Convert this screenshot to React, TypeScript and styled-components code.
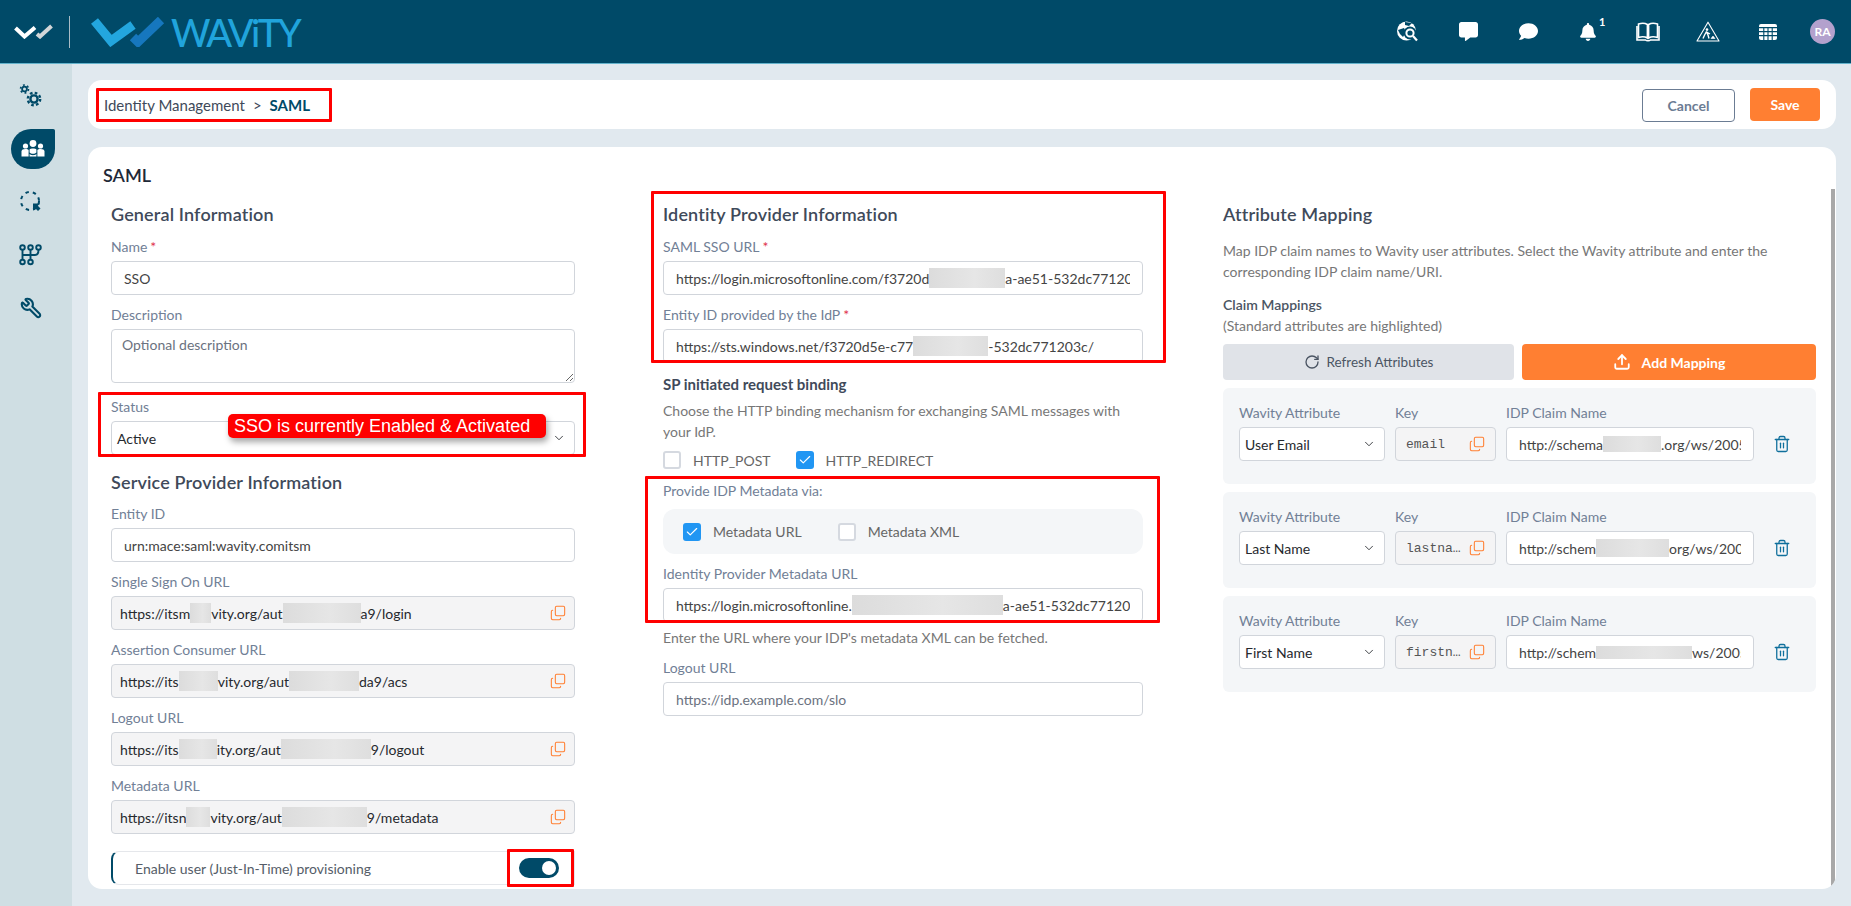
import React from 'react';
import styled, { createGlobalStyle } from 'styled-components';
import { Check, ChevronDown, Copy, RotateCw, Trash2, Upload, Wrench } from 'lucide-react';
import { FaBell, FaComment, FaCommentAlt } from 'react-icons/fa';

const dark = '#004a68';
const orange = '#ff7f32';

const GlobalStyle = createGlobalStyle`
    html, body {
        margin: 0;
        height: 100%;
        overflow: hidden;
        background: #e1e9ef;
        font-family: Lato, 'Noto Sans', sans-serif;
    }
    * { box-sizing: border-box; }
`;

const Header = styled.header`
    height: 64px;
    background: ${dark};
    border-bottom: 1px solid #63b3cc;
    display: flex;
    align-items: center;
    padding: 0 16px 0 14px;
`;

const Divider = styled.div`
    width: 1px;
    height: 32px;
    background: #a9bcc6;
    margin: 0 21px 0 16px;
`;

const BrandText = styled.span`
    color: #20a4dc;
    font-size: 38px;
    font-weight: 500;
    line-height: 1;
    letter-spacing: -2.5px;
    margin-left: 6px;
`;

const HeaderIcons = styled.div`
    margin-left: auto;
    display: flex;
    align-items: center;
`;

const HeaderIcon = styled.div`
    width: 60px;
    height: 40px;
    display: flex;
    align-items: center;
    justify-content: center;
    color: #fff;
    position: relative;
`;

const BellCount = styled.span`
    position: absolute;
    top: 3px;
    left: 41px;
    font-size: 11px;
    font-weight: 700;
    color: #fff;
`;

const Avatar = styled.div`
    width: 25px;
    height: 25px;
    border-radius: 50%;
    background: #b3a1cd;
    color: #fff;
    font-size: 12px;
    font-weight: 700;
    display: flex;
    align-items: center;
    justify-content: center;
    margin-left: 12px;
`;

const Body = styled.div`
    display: flex;
    height: 842px;
`;

const Sidebar = styled.nav`
    width: 72px;
    flex-shrink: 0;
    background: #cfdee3;
    display: flex;
    flex-direction: column;
    align-items: flex-start;
    gap: 13px;
    padding: 12px 0 0 11px;
`;

const NavItem = styled.div<{ $active?: boolean }>`
    width: ${p => (p.$active ? 44 : 40)}px;
    height: 40px;
    display: flex;
    align-items: center;
    justify-content: center;
    color: ${p => (p.$active ? '#fff' : dark)};
    background: ${p => (p.$active ? dark : 'transparent')};
    border-radius: ${p => (p.$active ? '22px 2px 22px 22px' : '0')};
`;

const FlippedWrench = styled(Wrench)`
    transform: scaleX(-1);
`;

const Main = styled.main`
    flex: 1;
    padding: 16px 15px 17px 16px;
    display: flex;
    flex-direction: column;
    gap: 18px;
`;

const CrumbBar = styled.div`
    height: 49px;
    flex-shrink: 0;
    background: #fff;
    border-radius: 14px;
    display: flex;
    align-items: center;
    padding: 0 16px 0 8px;
`;

const CrumbMark = styled.div`
    width: 236px;
    height: 34px;
    border: 3px solid #f00;
    border-radius: 1px;
    display: flex;
    align-items: center;
    padding-left: 5px;
    font-size: 15px;
    color: #3f4a5a;
`;

const CrumbSep = styled.span`
    margin: 0 8px;
`;

const CrumbCurrent = styled.b`
    color: ${dark};
    font-weight: 700;
`;

const Actions = styled.div`
    margin-left: auto;
    display: flex;
    align-items: center;
    gap: 15px;
`;

const CancelButton = styled.button`
    width: 93px;
    height: 33px;
    margin-top: 2px;
    background: #fff;
    border: 1px solid #6b7c93;
    border-radius: 4px;
    color: #6b7c93;
    font: 700 14px Lato, sans-serif;
`;

const SaveButton = styled.button`
    width: 70px;
    height: 33px;
    background: ${orange};
    border: 0;
    border-radius: 4px;
    color: #fff;
    font: 700 14px Lato, sans-serif;
`;

const Card = styled.section`
    flex: 1;
    min-height: 0;
    background: #fff;
    border-radius: 14px;
    padding: 16px 0 0 15px;
    position: relative;
    overflow: hidden;
`;

const ScrollThumb = styled.div`
    position: absolute;
    top: 42px;
    bottom: 0;
    right: 1px;
    width: 4px;
    background: #a8a8a8;
`;

const CardTitle = styled.h1`
    margin: 0 0 15px;
    font-size: 18px;
    line-height: 24px;
    font-weight: 600;
    color: #1f2937;
`;

const Columns = styled.div`
    display: grid;
    grid-template-columns: 552px 560px 593px;
    padding-left: 8px;
`;

const Column = styled.div<{ $gap?: number }>`
    padding-right: ${p => p.$gap || 0}px;
`;

const Heading = styled.h2<{ $top?: number; $bottom?: number }>`
    margin: ${p => p.$top || 0}px 0 ${p => p.$bottom ?? 11}px;
    font-size: 18px;
    line-height: 24px;
    font-weight: 600;
    letter-spacing: 0.15px;
    color: #3f4a5a;
`;

const Field = styled.div<{ $tight?: boolean }>`
    margin-bottom: ${p => (p.$tight ? 0 : 10)}px;
`;

const Label = styled.label`
    display: block;
    height: 20px;
    margin-bottom: 4px;
    font-size: 14px;
    line-height: 20px;
    color: #718096;
`;

const Required = styled.span`
    color: #e0324b;
    margin-left: 3px;
`;

const TextInput = styled.input`
    display: block;
    width: 100%;
    height: 34px;
    padding: 0 12px;
    border: 1px solid #d1d5db;
    border-radius: 4px;
    background: #fff;
    color: #444;
    font: 400 14px Lato, sans-serif;
    outline: none;
    &::placeholder { color: #6b7280; opacity: 1; }
`;

const TextArea = styled.textarea`
    display: block;
    width: 100%;
    height: 54px;
    padding: 6px 10px;
    border: 1px solid #d1d5db;
    border-radius: 4px;
    font: 400 14px Lato, sans-serif;
    outline: none;
    &::placeholder { color: #6b7280; opacity: 1; }
`;

const ValueBox = styled.div<{ $readOnly?: boolean; $pad?: number }>`
    height: 34px;
    display: flex;
    align-items: center;
    gap: 6px;
    padding: 0 ${p => p.$pad ?? 12}px;
    border: 1px solid #d1d5db;
    border-radius: 4px;
    background: ${p => (p.$readOnly ? '#f4f4f5' : '#fff')};
    color: ${p => (p.$readOnly ? '#26292e' : '#444')};
    font-size: 14px;
`;

const ValueText = styled.span`
    flex: 1;
    min-width: 0;
    display: flex;
    align-items: center;
    overflow: hidden;
    white-space: nowrap;
`;

const Blur = styled.span<{ $w: number; $h?: number }>`
    flex: none;
    width: ${p => p.$w}px;
    height: ${p => p.$h || 20}px;
    background: linear-gradient(90deg, #dcdcdc, #e6e6e6 60%, #dedede);
`;

const KeyText = styled.span`
    flex: 1;
    min-width: 0;
    overflow: hidden;
    white-space: nowrap;
    text-overflow: ellipsis;
    color: #555;
    font: 400 13px 'Liberation Mono', monospace;
`;

const CopyIcon = styled(Copy)`
    flex: none;
    color: ${orange};
    transform: scaleY(-1);
`;

const SelectBox = styled.div`
    height: 34px;
    width: 100%;
    display: flex;
    align-items: center;
    justify-content: space-between;
    padding: 0 8px 0 5px;
    border: 1px solid #d1d5db;
    border-radius: 4px;
    background: #fff;
    color: #26292e;
    font-size: 14px;
    position: relative;
`;

const Balloon = styled.div`
    position: absolute;
    left: 116px;
    top: -8px;
    width: 318px;
    height: 24px;
    padding-left: 6px;
    border-radius: 5px;
    background: #f00;
    color: #fff;
    font: 400 18px/24px 'Liberation Sans', Arial, sans-serif;
    white-space: nowrap;
    box-shadow: 2px 4px 6px rgba(0, 0, 0, 0.35);
`;

const Marked = styled.div<{ $t: number; $r: number; $b: number; $l: number; $mt?: number }>`
    position: relative;
    margin-top: ${p => p.$mt || 0}px;
    &::after {
        content: '';
        position: absolute;
        top: ${p => p.$t}px;
        right: ${p => p.$r}px;
        bottom: ${p => p.$b}px;
        left: ${p => p.$l}px;
        border: 3px solid #f00;
        border-radius: 1px;
        pointer-events: none;
    }
`;

const ToggleRow = styled.div`
    height: 34px;
    display: flex;
    align-items: center;
    justify-content: space-between;
    padding: 0 15px 0 22px;
    border: 1px solid #e5e7eb;
    border-left: 2px solid ${dark};
    border-radius: 8px 0 0 8px;
    font-size: 14px;
    color: #555d68;
`;

const Toggle = styled.div`
    width: 40px;
    height: 20px;
    border-radius: 10px;
    background: ${dark};
    display: flex;
    align-items: center;
    justify-content: flex-end;
    padding-right: 3px;
    &::after {
        content: '';
        width: 14px;
        height: 14px;
        border-radius: 50%;
        background: #fff;
    }
`;

const SubHeading = styled.h3`
    margin: 11px 0 6px;
    font-size: 15px;
    line-height: 20px;
    font-weight: 700;
    color: #3f4a5a;
`;

const HelpText = styled.p<{ $top?: number; $bottom?: number }>`
    margin: ${p => p.$top || 0}px 0 ${p => p.$bottom ?? 9}px;
    font-size: 14px;
    line-height: 21px;
    color: #777;
`;

const CheckRow = styled.div`
    display: flex;
    align-items: center;
    gap: 25px;
    height: 18px;
    margin: 9px 0 12px;
`;

const MetaPill = styled.div`
    height: 45px;
    margin: 8px 0 10px;
    padding-left: 20px;
    display: flex;
    align-items: center;
    gap: 36px;
    border-radius: 12px;
    background: #f4f6f8;
`;

const CheckItem = styled.div`
    display: flex;
    align-items: center;
    gap: 12px;
    font-size: 14px;
    color: #666;
`;

const Tick = styled.span<{ $on?: boolean }>`
    width: 18px;
    height: 18px;
    border-radius: 3px;
    border: ${p => (p.$on ? '0' : '2px solid #d5d9e0')};
    background: ${p => (p.$on ? '#2196f3' : '#fff')};
    color: #fff;
    display: flex;
    align-items: center;
    justify-content: center;
`;

const ClaimTitle = styled.div`
    font-size: 14px;
    line-height: 21px;
    font-weight: 600;
    color: #4b5563;
`;

const ClaimNote = styled.div`
    font-size: 14px;
    line-height: 21px;
    color: #777;
`;

const ButtonRow = styled.div`
    display: grid;
    grid-template-columns: 291px 294px;
    gap: 8px;
    margin: 8px 0;
`;

const ActionButton = styled.button<{ $primary?: boolean }>`
    height: 36px;
    display: flex;
    align-items: center;
    justify-content: center;
    gap: ${p => (p.$primary ? 11 : 7)}px;
    border: 0;
    border-radius: 4px;
    background: ${p => (p.$primary ? orange : '#e0e3e8')};
    color: ${p => (p.$primary ? '#fff' : '#4b5563')};
    font: ${p => (p.$primary ? '700 14px' : '400 13.5px')} Lato, sans-serif;
`;

const MapRow = styled.div`
    height: 96px;
    margin-bottom: 8px;
    padding: 15px 16px 0;
    border-radius: 6px;
    background: #f4f6f8;
`;

const MapGrid = styled.div`
    display: grid;
    grid-template-columns: 146px 101px 248px 30px;
    column-gap: 10px;
    align-items: center;
`;

const TrashButton = styled.div`
    color: #0f6f9c;
    display: flex;
    justify-content: center;
    padding-left: 6px;
`;

const SmallLogo = () => (
    <svg width="39" height="15" viewBox="0 0 39 15">
        <polyline points="1.5,4 10.5,12.5 21,3.5" fill="none" stroke="#fff" strokeWidth="4" />
        <polyline points="23,10 26,12.5 37.5,2" fill="none" stroke="#d2d6d8" strokeWidth="4" />
    </svg>
);

const BigLogo = () => (
    <svg width="74" height="30" viewBox="0 0 74 30">
        <polyline points="3.5,4 20,24 42,8" fill="none" stroke="#23a6de" strokeWidth="9" />
        <polyline points="42,20 47,25 70,3" fill="none" stroke="#1677be" strokeWidth="9" />
    </svg>
);

const GlobeSearch = () => (
    <svg width="24" height="24" viewBox="0 0 24 24">
        <circle cx="10.5" cy="11" r="9.5" fill="#fff" />
        <path d="M2 10 L8 8 L10 12 L7 17 L4 14 Z" fill={dark} />
        <path d="M9 2 L16 3 L13 6 L9 5 Z" fill={dark} />
        <circle cx="14" cy="13" r="6.5" fill={dark} />
        <circle cx="14" cy="13" r="3.6" fill="none" stroke="#fff" strokeWidth="2" />
        <line x1="17" y1="16" x2="21" y2="20.5" stroke="#fff" strokeWidth="2.2" />
    </svg>
);

const BookIcon = () => (
    <svg width="24" height="20" viewBox="0 0 24 20" fill="none" stroke="#fff" strokeWidth="1.6">
        <path d="M2.5 2 C6 0.8 9 1 11.4 2.5 V16 C9 14.6 6 14.4 2.5 15.5 Z" />
        <path d="M21.5 2 C18 0.8 15 1 12.6 2.5 V16 C15 14.6 18 14.4 21.5 15.5 Z" />
        <path d="M1 4 V18 H9.5 C10.5 19 13.5 19 14.5 18 H23 V4" />
    </svg>
);

const RoadworkIcon = () => (
    <svg width="24" height="21" viewBox="0 0 24 21" fill="none" stroke="#fff">
        <path d="M12 1.2 L23 20 H1 Z" strokeWidth="1.1" strokeLinejoin="round" />
        <circle cx="11" cy="8.6" r="1.3" fill="#fff" stroke="none" />
        <path d="M10.5 10.5 L8.6 14 L7 17.5 M10.5 10.5 L12 14 L13 17.5 M10.5 11 L14 13" strokeWidth="1.4" />
        <path d="M15 17.5 L17 15 L19 17.5 Z" fill="#fff" strokeWidth="0.6" />
    </svg>
);

const GridIcon = () => (
    <svg width="18" height="16" viewBox="0 0 18 16">
        <rect width="18" height="16" rx="2" fill="#fff" />
        <path d="M0 3.6 H18 M0 7.6 H18 M0 11.6 H18 M4.8 3 V16 M9 3 V16 M13.2 3 V16" stroke={dark} strokeWidth="1.1" />
    </svg>
);

const GearsIcon = () => (
    <svg width="24" height="24" viewBox="0 0 24 24" fill="none" stroke={dark}>
        <circle cx="5.5" cy="5" r="2.4" strokeWidth="1.8" />
        <circle cx="5.5" cy="5" r="4" strokeWidth="1.6" strokeDasharray="1.9 2.3" />
        <circle cx="15" cy="15" r="3.6" strokeWidth="2.4" />
        <circle cx="15" cy="15" r="6.2" strokeWidth="2.4" strokeDasharray="2.6 2.27" />
    </svg>
);

const TeamIcon = () => (
    <svg width="24" height="20" viewBox="0 0 24 20" fill="#fff">
        <circle cx="12" cy="4.5" r="3.4" />
        <circle cx="4.5" cy="7" r="2.6" />
        <circle cx="19.5" cy="7" r="2.6" />
        <path d="M0.5 17.5 V12.5 C0.5 10.8 2 10 4.5 10 C6 10 7 10.3 7.6 11 L7.6 17.5 Z" />
        <path d="M23.5 17.5 V12.5 C23.5 10.8 22 10 19.5 10 C18 10 17 10.3 16.4 11 L16.4 17.5 Z" />
        <path d="M8.6 10.5 C9.6 9.2 14.4 9.2 15.4 10.5 V13.5 C14 15.3 10 15.3 8.6 13.5 Z" />
        <path d="M8.6 15 C10 16.6 14 16.6 15.4 15 V17.5 H8.6 Z" />
    </svg>
);

const CycleIcon = () => (
    <svg width="24" height="24" viewBox="0 0 24 24">
        <circle cx="11" cy="11" r="9" fill="none" stroke={dark} strokeWidth="2" strokeDasharray="3.4 4.1" />
        <path d="M14 13.5 H21 L18.8 15.7 L21.5 18.5 L19 21 L16.2 18.2 L14 20.4 Z" fill={dark} />
    </svg>
);

const TreeIcon = () => (
    <svg width="24" height="22" viewBox="0 0 24 22" fill="none" stroke={dark} strokeWidth="1.9">
        <circle cx="3.5" cy="3.5" r="2.3" />
        <circle cx="11.5" cy="3.5" r="2.3" />
        <circle cx="19.5" cy="3.5" r="2.3" />
        <circle cx="3.5" cy="18" r="2.3" />
        <circle cx="11.5" cy="18" r="2.3" />
        <path d="M3.5 6 V15.5 M11.5 6 V15.5 M3.5 11 H16 C18 11 19.5 9.5 19.5 6" />
    </svg>
);

interface Segment { text?: string; blur?: number; h?: number }

const Masked: React.FC<{ parts: Segment[] }> = ({ parts }) => (
    <ValueText>
        {parts.map((part, i) => part.text
            ? <span key={i}>{part.text}</span>
            : <Blur key={i} $w={part.blur || 0} $h={part.h} />)}
    </ValueText>
);

const ReadOnlyField: React.FC<{ label: string; parts: Segment[] }> = ({ label, parts }) => (
    <Field>
        <Label>{label}</Label>
        <ValueBox $readOnly $pad={8}>
            <Masked parts={parts} />
            <CopyIcon size={16} strokeWidth={1.6} />
        </ValueBox>
    </Field>
);

const mappings = [
    {
        attribute: 'User Email',
        keyName: 'email',
        claim: [{ text: 'http://schema' }, { blur: 58, h: 16 }, { text: '.org/ws/2005/05/identity' }],
    },
    {
        attribute: 'Last Name',
        keyName: 'lastname',
        claim: [{ text: 'http://schem' }, { blur: 73, h: 18 }, { text: 'org/ws/2005/05/identity' }],
    },
    {
        attribute: 'First Name',
        keyName: 'firstname',
        claim: [{ text: 'http://schem' }, { blur: 96, h: 13 }, { text: 'ws/2005/05/identity' }],
    },
];

const App: React.FC = () => (
    <>
        <GlobalStyle />
        <Header>
            <SmallLogo />
            <Divider />
            <BigLogo />
            <BrandText>WAViTY</BrandText>
            <HeaderIcons>
                <HeaderIcon><GlobeSearch /></HeaderIcon>
                <HeaderIcon><FaCommentAlt size={19} /></HeaderIcon>
                <HeaderIcon><FaComment size={19} /></HeaderIcon>
                <HeaderIcon><FaBell size={18} /><BellCount>1</BellCount></HeaderIcon>
                <HeaderIcon><BookIcon /></HeaderIcon>
                <HeaderIcon><RoadworkIcon /></HeaderIcon>
                <HeaderIcon><GridIcon /></HeaderIcon>
                <Avatar>RA</Avatar>
            </HeaderIcons>
        </Header>
        <Body>
            <Sidebar>
                <NavItem><GearsIcon /></NavItem>
                <NavItem $active><TeamIcon /></NavItem>
                <NavItem><CycleIcon /></NavItem>
                <NavItem><TreeIcon /></NavItem>
                <NavItem><FlippedWrench size={22} strokeWidth={2.3} /></NavItem>
            </Sidebar>
            <Main>
                <CrumbBar>
                    <CrumbMark>
                        Identity Management<CrumbSep>&gt;</CrumbSep><CrumbCurrent>SAML</CrumbCurrent>
                    </CrumbMark>
                    <Actions>
                        <CancelButton>Cancel</CancelButton>
                        <SaveButton>Save</SaveButton>
                    </Actions>
                </CrumbBar>
                <Card>
                    <ScrollThumb />
                    <CardTitle>SAML</CardTitle>
                    <Columns>
                        <Column $gap={88}>
                            <Heading>General Information</Heading>
                            <Field>
                                <Label>Name<Required>*</Required></Label>
                                <TextInput defaultValue='SSO' />
                            </Field>
                            <Field>
                                <Label>Description</Label>
                                <TextArea placeholder='Optional description' />
                            </Field>
                            <Marked $t={-5} $r={-11} $b={-2} $l={-13} $mt={14}>
                                <Field $tight>
                                    <Label>Status</Label>
                                    <SelectBox>
                                        Active
                                        <ChevronDown size={14} strokeWidth={1.5} />
                                        <Balloon>SSO is currently Enabled &amp; Activated</Balloon>
                                    </SelectBox>
                                </Field>
                            </Marked>
                            <Heading $top={15} $bottom={10}>Service Provider Information</Heading>
                            <Field>
                                <Label>Entity ID</Label>
                                <TextInput defaultValue='urn:mace:saml:wavity.comitsm' />
                            </Field>
                            <ReadOnlyField
                                label='Single Sign On URL'
                                parts={[{ text: 'https://itsm' }, { blur: 21 }, { text: 'vity.org/aut' }, { blur: 78 }, { text: 'a9/login' }]}
                            />
                            <ReadOnlyField
                                label='Assertion Consumer URL'
                                parts={[{ text: 'https://its' }, { blur: 39 }, { text: 'vity.org/aut' }, { blur: 70 }, { text: 'da9/acs' }]}
                            />
                            <ReadOnlyField
                                label='Logout URL'
                                parts={[{ text: 'https://its' }, { blur: 38 }, { text: 'ity.org/aut' }, { blur: 90 }, { text: '9/logout' }]}
                            />
                            <ReadOnlyField
                                label='Metadata URL'
                                parts={[{ text: 'https://itsn' }, { blur: 24 }, { text: 'vity.org/aut' }, { blur: 85 }, { text: '9/metadata' }]}
                            />
                            <Marked $t={-2} $r={1} $b={-2} $l={396} $mt={17}>
                                <ToggleRow>
                                    Enable user (Just-In-Time) provisioning
                                    <Toggle />
                                </ToggleRow>
                            </Marked>
                        </Column>
                        <Column $gap={80}>
                            <Marked $t={-11} $r={-23} $b={0} $l={-12}>
                                <Heading>Identity Provider Information</Heading>
                                <Field>
                                    <Label>SAML SSO URL<Required>*</Required></Label>
                                    <ValueBox><Masked parts={[{ text: 'https://login.microsoftonline.com/f3720d' }, { blur: 76 }, { text: 'a-ae51-532dc771203c/saml2' }]} /></ValueBox>
                                </Field>
                                <Field $tight>
                                    <Label>Entity ID provided by the IdP<Required>*</Required></Label>
                                    <ValueBox><Masked parts={[{ text: 'https://sts.windows.net/f3720d5e-c77' }, { blur: 75 }, { text: '-532dc771203c/' }]} /></ValueBox>
                                </Field>
                            </Marked>
                            <SubHeading>SP initiated request binding</SubHeading>
                            <HelpText $bottom={0}>Choose the HTTP binding mechanism for exchanging SAML messages with your IdP.</HelpText>
                            <CheckRow>
                                <CheckItem><Tick />HTTP_POST</CheckItem>
                                <CheckItem><Tick $on><Check size={14} strokeWidth={2} /></Tick>HTTP_REDIRECT</CheckItem>
                            </CheckRow>
                            <Marked $t={-5} $r={-17} $b={-1} $l={-18}>
                                <Label>Provide IDP Metadata via:</Label>
                                <MetaPill>
                                    <CheckItem><Tick $on><Check size={14} strokeWidth={2} /></Tick>Metadata URL</CheckItem>
                                    <CheckItem><Tick />Metadata XML</CheckItem>
                                </MetaPill>
                                <Field $tight>
                                    <Label>Identity Provider Metadata URL</Label>
                                    <ValueBox><Masked parts={[{ text: 'https://login.microsoftonline.' }, { blur: 151 }, { text: 'a-ae51-532dc771203c/saml2' }]} /></ValueBox>
                                </Field>
                            </Marked>
                            <HelpText $top={5} $bottom={10}>Enter the URL where your IDP's metadata XML can be fetched.</HelpText>
                            <Field>
                                <Label>Logout URL</Label>
                                <TextInput placeholder='https://idp.example.com/slo' />
                            </Field>
                        </Column>
                        <Column>
                            <Heading>Attribute Mapping</Heading>
                            <HelpText $top={14} $bottom={12}>Map IDP claim names to Wavity user attributes. Select the Wavity attribute and enter the corresponding IDP claim name/URI.</HelpText>
                            <ClaimTitle>Claim Mappings</ClaimTitle>
                            <ClaimNote>(Standard attributes are highlighted)</ClaimNote>
                            <ButtonRow>
                                <ActionButton><RotateCw size={16} />Refresh Attributes</ActionButton>
                                <ActionButton $primary><Upload size={18} strokeWidth={2.4} />Add Mapping</ActionButton>
                            </ButtonRow>
                            {mappings.map(row => (
                                <MapRow key={row.keyName}>
                                    <MapGrid>
                                        <Label>Wavity Attribute</Label>
                                        <Label>Key</Label>
                                        <Label>IDP Claim Name</Label>
                                        <span />
                                        <SelectBox>
                                            {row.attribute}
                                            <ChevronDown size={14} strokeWidth={1.5} />
                                        </SelectBox>
                                        <ValueBox $readOnly $pad={10}>
                                            <KeyText>{row.keyName}</KeyText>
                                            <CopyIcon size={16} strokeWidth={1.6} />
                                        </ValueBox>
                                        <ValueBox><Masked parts={row.claim} /></ValueBox>
                                        <TrashButton><Trash2 size={18} strokeWidth={1.7} /></TrashButton>
                                    </MapGrid>
                                </MapRow>
                            ))}
                        </Column>
                    </Columns>
                </Card>
            </Main>
        </Body>
    </>
);

export default App;
